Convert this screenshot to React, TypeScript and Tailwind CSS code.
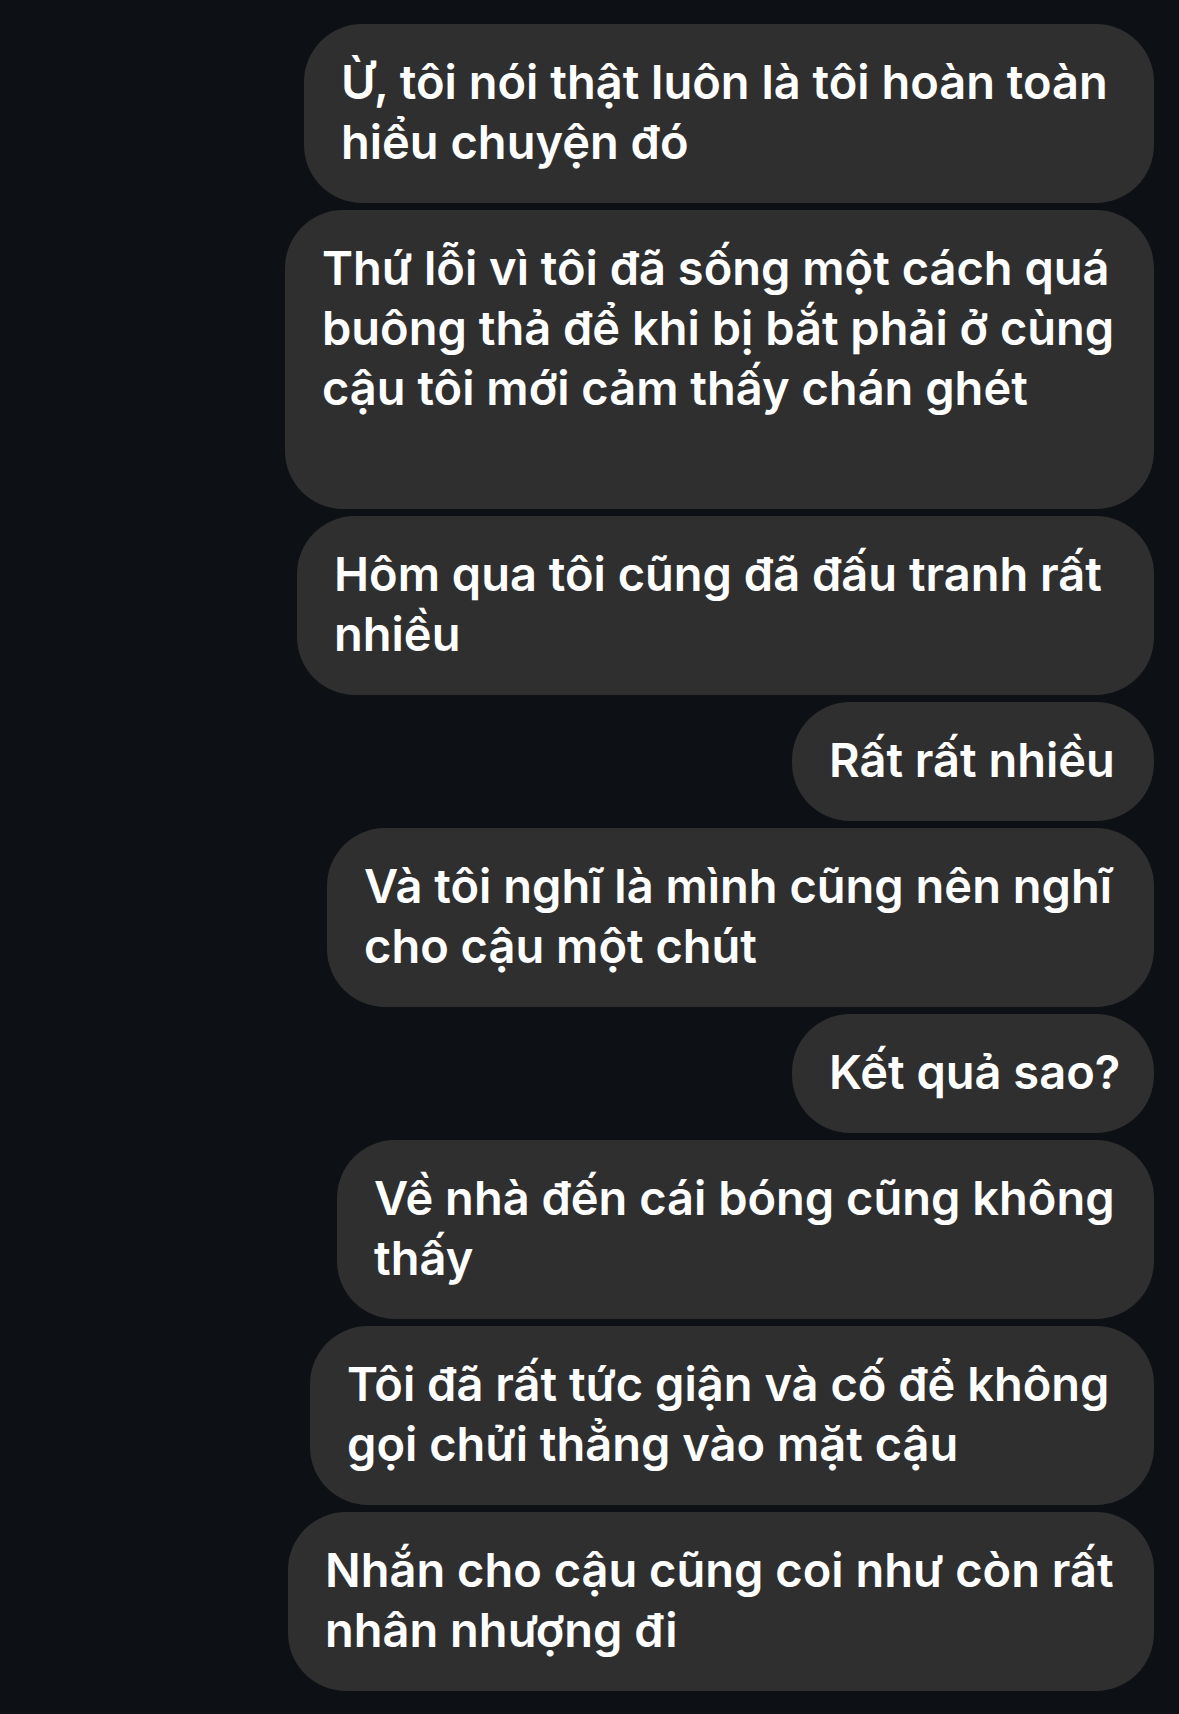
import React from 'react';

type Msg = { lines: string[]; w: string };

const MESSAGES: Msg[] = [
  { lines: ['Ừ, tôi nói thật luôn là tôi hoàn toàn', 'hiểu chuyện đó'], w: 'w-[850px]' },
  { lines: ['Thứ lỗi vì tôi đã sống một cách quá', 'buông thả để khi bị bắt phải ở cùng', 'cậu tôi mới cảm thấy chán ghét', '\u00a0'], w: 'w-[869px]' },
  { lines: ['Hôm qua tôi cũng đã đấu tranh rất', 'nhiều'], w: 'w-[857px]' },
  { lines: ['Rất rất nhiều'], w: 'w-[362px]' },
  { lines: ['Và tôi nghĩ là mình cũng nên nghĩ', 'cho cậu một chút'], w: 'w-[827px]' },
  { lines: ['Kết quả sao?'], w: 'w-[362px]' },
  { lines: ['Về nhà đến cái bóng cũng không', 'thấy'], w: 'w-[817px]' },
  { lines: ['Tôi đã rất tức giận và cố để không', 'gọi chửi thẳng vào mặt cậu'], w: 'w-[844px]' },
  { lines: ['Nhắn cho cậu cũng coi như còn rất', 'nhân nhượng đi'], w: 'w-[866px]' },
];

const Bubble: React.FC<{ msg: Msg }> = ({ msg }) => (
  <div
    className={`${msg.w} bg-[#2f2f2f] rounded-[58px] pl-[37px] pr-[20px] pt-[28px] pb-[31px] text-white text-[47px] leading-[60px] font-semibold whitespace-nowrap overflow-hidden`}
  >
    {msg.lines.map((l, i) => (
      <div key={i}>{l}</div>
    ))}
  </div>
);

export default function App() {
  return (
    <div className="w-[1179px] h-[1714px] bg-[#0d1015] flex flex-col items-end gap-[7px] pt-[24px] pr-[25px] overflow-hidden font-['Inter','Noto_Sans',sans-serif]">
      {MESSAGES.map((m, i) => (
        <Bubble key={i} msg={m} />
      ))}
    </div>
  );
}
